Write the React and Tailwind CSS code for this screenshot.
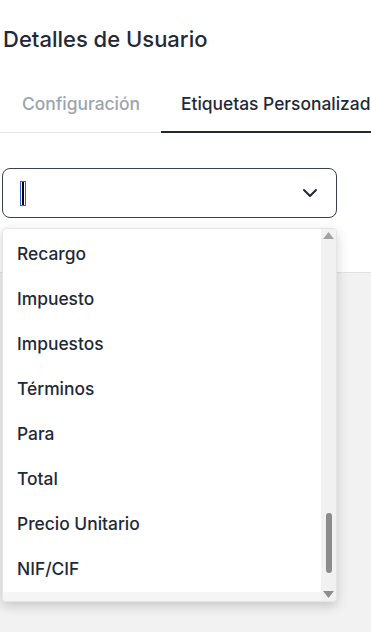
import { ChevronDown } from 'lucide-react';

const labels = ['Recargo', 'Impuesto', 'Impuestos', 'Términos', 'Para', 'Total', 'Precio Unitario', 'NIF/CIF'];

function Scrollbar() {
  return (
    <div className="w-[15px] shrink-0 bg-[#f1f1f1] flex flex-col items-center justify-between py-[3px]">
      <svg width="11" height="8" viewBox="0 0 11 8"><path d="M5.5 0 L11 7 L0 7 Z" fill="#a3a3a3" /></svg>
      <div className="flex-1 w-full flex flex-col justify-end items-center pb-[17px]">
        <div className="w-[6px] h-[60px] rounded-full bg-[#8c8c8c]" />
      </div>
      <svg width="11" height="8" viewBox="0 0 11 8"><path d="M0 1 L11 1 L5.5 8 Z" fill="#8c8c8c" /></svg>
    </div>
  );
}

export default function App() {
  return (
    <div className="relative h-[632px] overflow-hidden flex flex-col bg-white text-[#1f2937]" style={{ fontFamily: 'Inter, "Noto Sans", sans-serif' }}>
      <h1 className="pl-[3px] pt-[26px] text-[22px] leading-[26px] font-medium text-[#1f2937] whitespace-nowrap">Detalles de Usuario</h1>

      <div className="mt-[40px] flex whitespace-nowrap">
        <div className="w-[161px] shrink-0 pl-[22px] pb-[17px] pt-[1px] text-[17.4px] leading-[22px] font-medium text-[#9ca3af] border-b border-[#e5e7eb]">Configuración</div>
        <div className="flex-1 min-w-0 pl-[20px] pb-[16px] pt-[1px] text-[17.4px] leading-[22px] font-medium text-[#1f2937] border-b-2 border-[#1f2937] overflow-hidden">Etiquetas Personalizadas</div>
      </div>

      <div className="pt-[35px] px-[2px] w-[339px]">
        <div className="h-[50px] rounded-[8px] border border-[#374151] flex items-center pl-[17px] pr-[14px]">
          <span className="w-[6px] h-[25px] border border-[#2563eb] flex items-stretch pl-[1px]">
            <span className="w-[2px] bg-black" />
          </span>
          <div className="flex-1" />
          <ChevronDown className="w-[24px] h-[24px] text-[#1f2937]" strokeWidth={2} />
        </div>
      </div>

      <div className="mt-[54px] flex-1 bg-[#f2f2f2] border-t border-[#e2e2e2]" />

      <div className="absolute left-[2px] top-[228px] w-[335px] h-[374px] bg-white rounded-[4px] overflow-hidden flex shadow-[0_4px_12px_rgba(0,0,0,0.18)] border border-[#e5e5e5]">
        <div className="flex-1 flex flex-col">
          <div className="pt-[3px]">
            {labels.map((l) => (
              <div key={l} className="h-[45px] flex items-center pl-[14px] text-[17.4px] font-medium text-[#1f2937] whitespace-nowrap">{l}</div>
            ))}
          </div>
          <div className="flex-1 bg-[#f5f5f5]" />
        </div>
        <Scrollbar />
      </div>
    </div>
  );
}
